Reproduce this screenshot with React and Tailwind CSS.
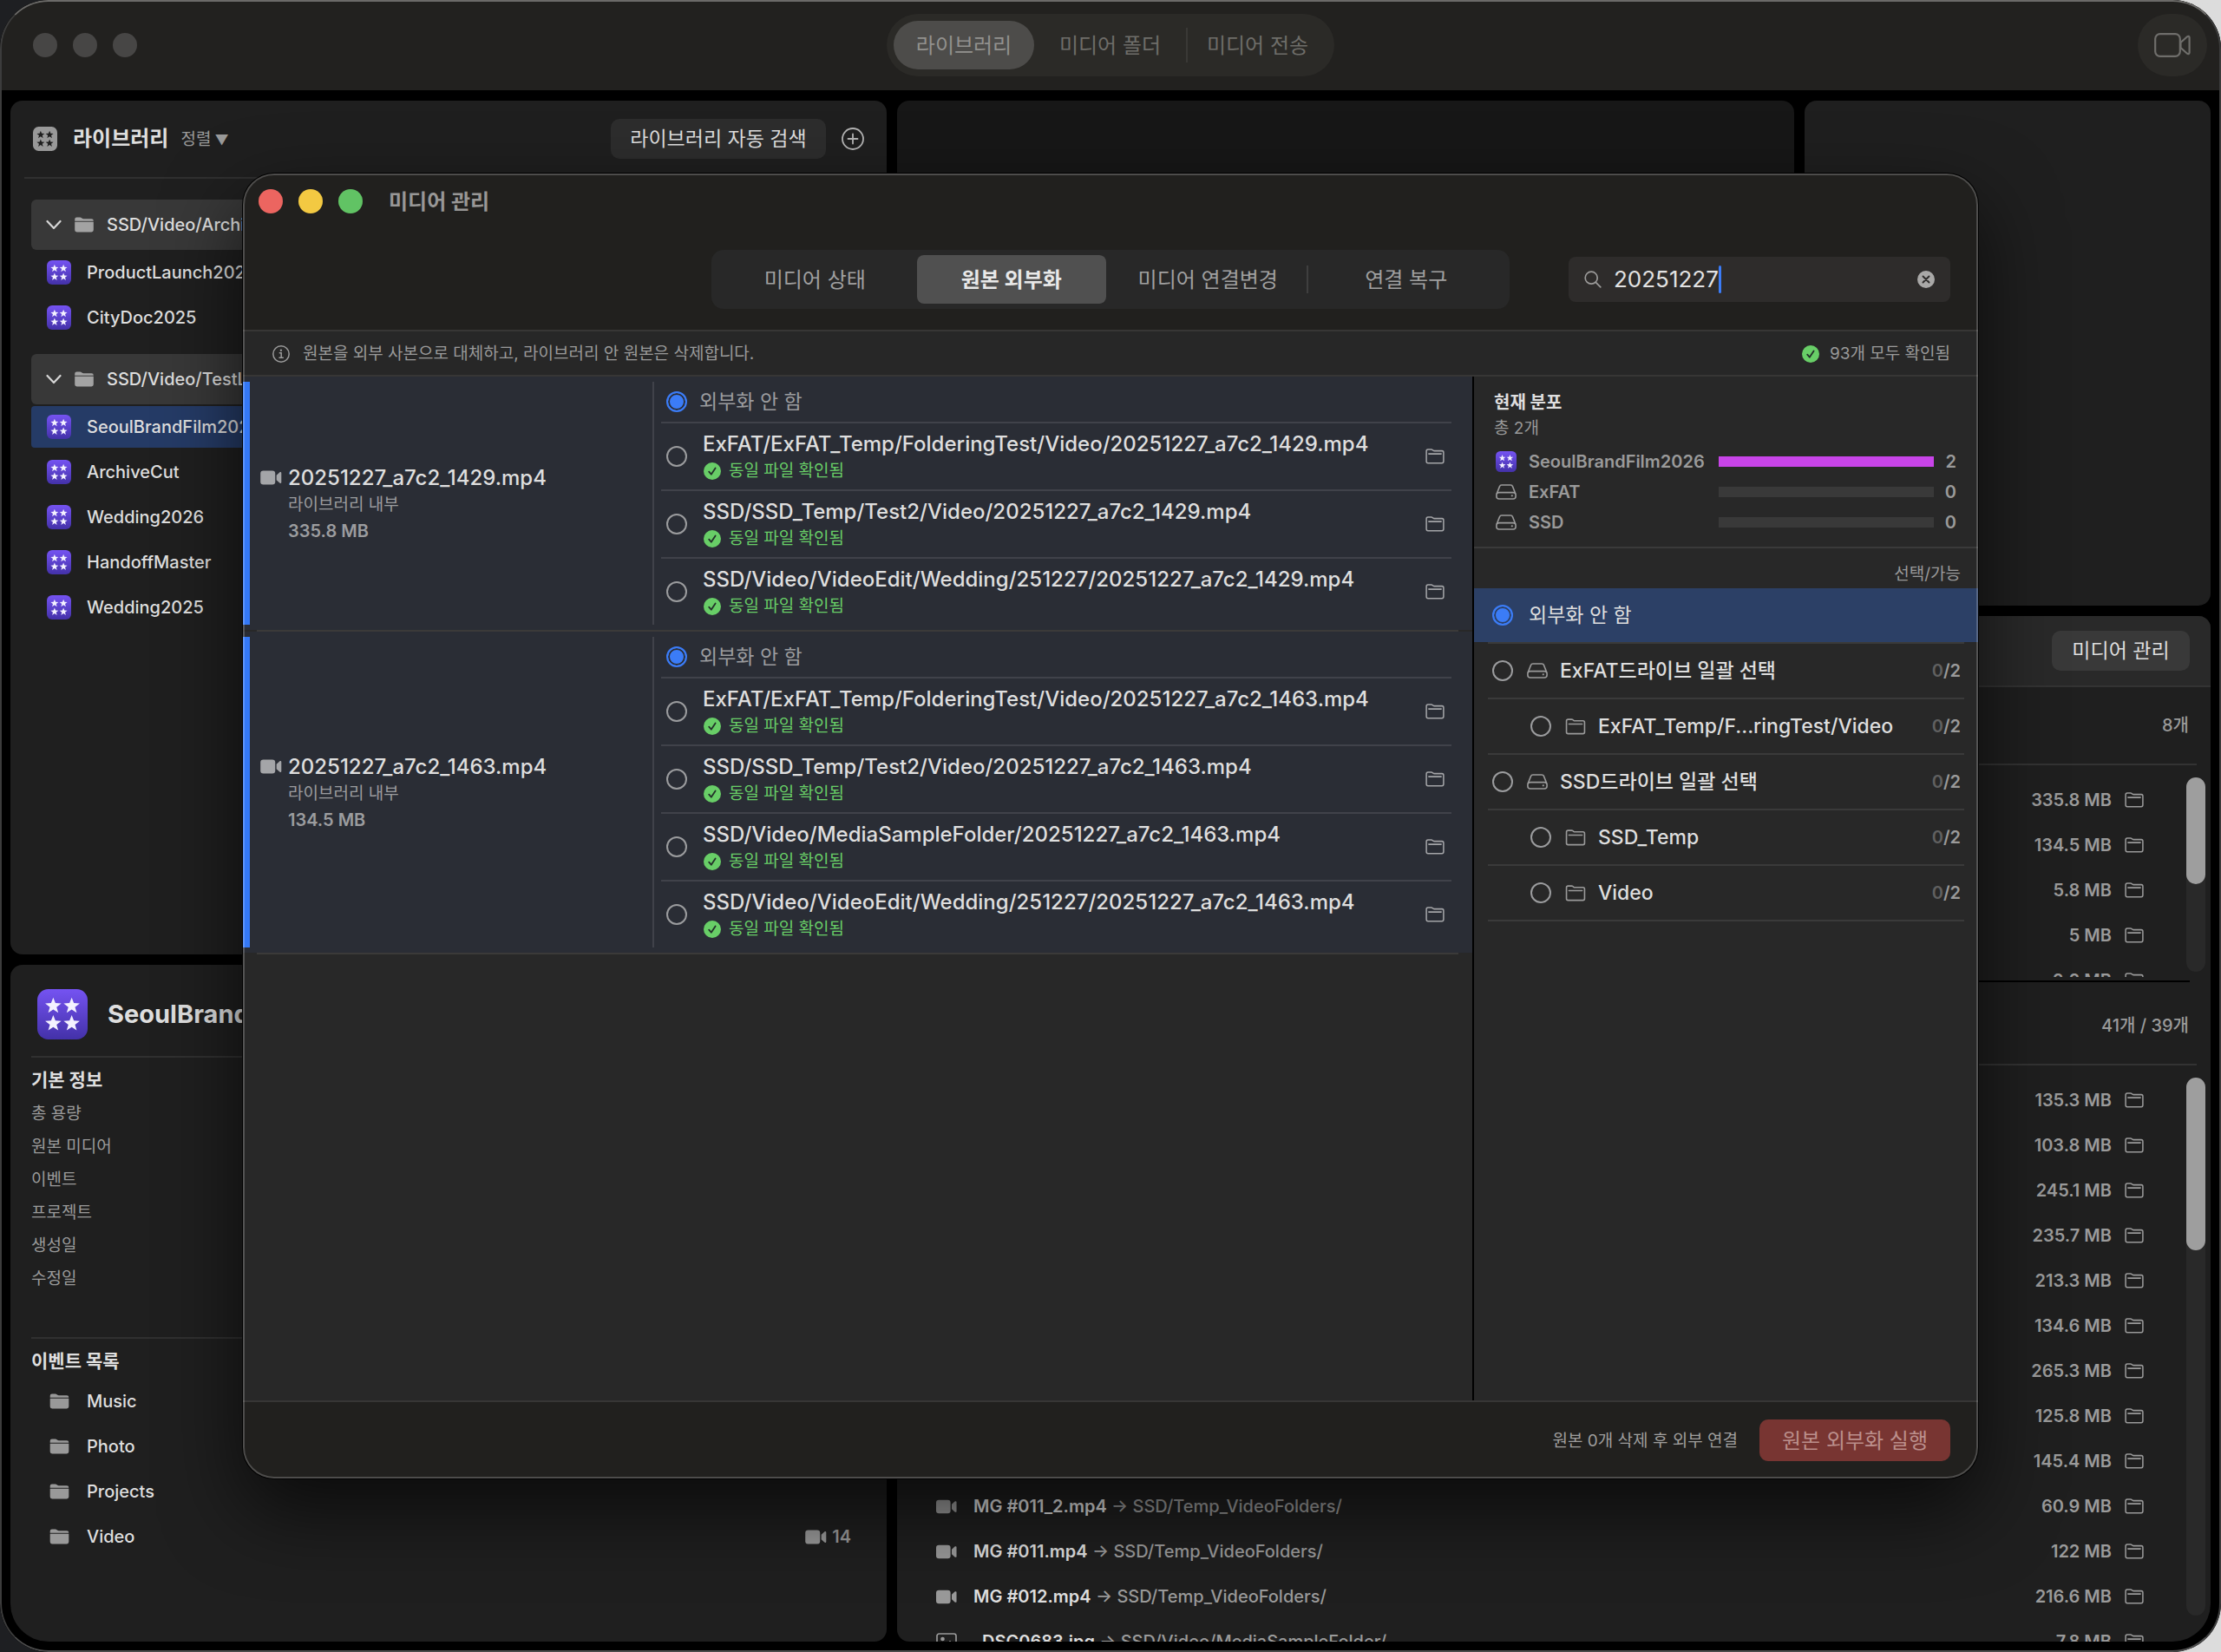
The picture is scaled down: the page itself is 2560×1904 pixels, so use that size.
import React, { useState } from "react";

const STAR = "0,-5 1.3,-1.7 4.8,-1.5 2,0.7 3,4.1 0,2.1 -3,4.1 -2,0.7 -4.8,-1.5 -1.3,-1.7";

const libraryGroups = [
  { path: "SSD/Video/Archive", items: ["ProductLaunch2025", "CityDoc2025"] },
  {
    path: "SSD/Video/TestLibrary",
    items: ["SeoulBrandFilm2026", "ArchiveCut", "Wedding2026", "HandoffMaster", "Wedding2025"],
  },
];

const infoLabels = ["총 용량", "원본 미디어", "이벤트", "프로젝트", "생성일", "수정일"];

const events = [
  { name: "Music" },
  { name: "Photo" },
  { name: "Projects" },
  { name: "Video", count: 14 },
];

const insideMedia = ["335.8 MB", "134.5 MB", "5.8 MB", "5 MB", "2.2 MB"];

const outsideMedia = [
  { size: "135.3 MB" },
  { size: "103.8 MB" },
  { size: "245.1 MB" },
  { size: "235.7 MB" },
  { size: "213.3 MB" },
  { size: "134.6 MB" },
  { size: "265.3 MB" },
  { size: "125.8 MB" },
  { size: "145.4 MB" },
  { size: "60.9 MB", name: "MG #011_2.mp4", path: "SSD/Temp_VideoFolders/" },
  { size: "122 MB", name: "MG #011.mp4", path: "SSD/Temp_VideoFolders/" },
  { size: "216.6 MB", name: "MG #012.mp4", path: "SSD/Temp_VideoFolders/" },
  { size: "7.8 MB", name: "_DSC0683.jpg", path: "SSD/Video/MediaSampleFolder/", photo: true },
];

const files = [
  {
    name: "20251227_a7c2_1429.mp4",
    size: "335.8 MB",
    copies: [
      "ExFAT/ExFAT_Temp/FolderingTest/Video/20251227_a7c2_1429.mp4",
      "SSD/SSD_Temp/Test2/Video/20251227_a7c2_1429.mp4",
      "SSD/Video/VideoEdit/Wedding/251227/20251227_a7c2_1429.mp4",
    ],
  },
  {
    name: "20251227_a7c2_1463.mp4",
    size: "134.5 MB",
    copies: [
      "ExFAT/ExFAT_Temp/FolderingTest/Video/20251227_a7c2_1463.mp4",
      "SSD/SSD_Temp/Test2/Video/20251227_a7c2_1463.mp4",
      "SSD/Video/MediaSampleFolder/20251227_a7c2_1463.mp4",
      "SSD/Video/VideoEdit/Wedding/251227/20251227_a7c2_1463.mp4",
    ],
  },
];

const distribution = [
  { name: "SeoulBrandFilm2026", count: 2, library: true },
  { name: "ExFAT", count: 0 },
  { name: "SSD", count: 0 },
];

const targets = [
  { name: "ExFAT드라이브 일괄 선택", drive: true },
  { name: "ExFAT_Temp/F...ringTest/Video" },
  { name: "SSD드라이브 일괄 선택", drive: true },
  { name: "SSD_Temp" },
  { name: "Video" },
];

const tabs = ["미디어 상태", "원본 외부화", "미디어 연결변경", "연결 복구"];

/* ICONS */

const Stars = ({ fill }) => (
  <g fill={fill}>
    <polygon points={STAR} transform="translate(9.5 10)" />
    <polygon points={STAR} transform="translate(20.5 10)" />
    <polygon points={STAR} transform="translate(9.5 20.5)" />
    <polygon points={STAR} transform="translate(20.5 20.5)" />
  </g>
);

const LibraryIcon = ({ className }) => (
  <svg viewBox="0 0 30 30" className={className} aria-hidden="true">
    <defs>
      <linearGradient id="libraryFill" x1="0" y1="0" x2="0" y2="1">
        <stop offset="0" stopColor="#7553f2" />
        <stop offset="1" stopColor="#4331a8" />
      </linearGradient>
    </defs>
    <rect width="30" height="30" rx="6.5" fill="url(#libraryFill)" />
    <Stars fill="#f4f2ff" />
  </svg>
);

const LibraryGlyph = ({ className }) => (
  <svg viewBox="0 0 30 30" className={className} aria-hidden="true">
    <rect width="30" height="30" rx="7" fill="#999999" />
    <Stars fill="#1f1f1f" />
  </svg>
);

const FolderSolid = ({ className }) => (
  <svg viewBox="0 0 24 20" className={className} aria-hidden="true">
    <path
      d="M0 5.2V3a2.4 2.4 0 0 1 2.4-2.4h4.4c.8 0 1.3.2 1.9.7l.9.7c.5.4.8.5 1.5.5h10.3A2.6 2.6 0 0 1 24 5.2z"
      fill="currentColor"
    />
    <path d="M0 6.5h24v10.3a2.6 2.6 0 0 1-2.6 2.6H2.6A2.6 2.6 0 0 1 0 16.8z" fill="currentColor" />
  </svg>
);

const FolderLine = ({ className }) => (
  <svg viewBox="0 0 24 20" className={className} fill="none" stroke="currentColor" strokeWidth="1.7" strokeLinejoin="round" strokeLinecap="round" aria-hidden="true">
    <path d="M1 16.5V3.2A2 2 0 0 1 3 1.2h4.3c.7 0 1.1.2 1.6.6l.8.6c.5.4.9.5 1.5.5H21a2 2 0 0 1 2 2v11.6a2 2 0 0 1-2 2H3a2 2 0 0 1-2-2z" />
    <path d="M4 6.8h16" />
  </svg>
);

const CameraSolid = ({ className }) => (
  <svg viewBox="0 0 26 18" className={className} fill="currentColor" aria-hidden="true">
    <rect width="18" height="17" y="0.5" rx="3.5" />
    <path d="M19.5 6l3.8-3.4c1-.9 2.2-.5 2.2.8v11.2c0 1.3-1.2 1.7-2.2.8L19.5 12z" />
  </svg>
);

const CameraLine = ({ className }) => (
  <svg viewBox="0 0 42 28" className={className} fill="none" stroke="currentColor" strokeWidth="2.2" strokeLinejoin="round" aria-hidden="true">
    <rect x="1.2" y="1.2" width="28.6" height="25.6" rx="5.5" />
    <path d="M30.5 11l7.5-6.7c1.2-1 2.6-.5 2.6 1.1v17.2c0 1.6-1.4 2.1-2.6 1.1L30.5 17z" />
  </svg>
);

const PhotoIcon = ({ className }) => (
  <svg viewBox="0 0 24 20" className={className} fill="none" stroke="currentColor" strokeWidth="1.7" aria-hidden="true">
    <rect x="1" y="1" width="22" height="18" rx="2.5" />
    <circle cx="7.5" cy="7" r="1.5" fill="currentColor" />
    <path d="M2 15.5l4.5-4 4 3.5 5.5-5 6.5 6" />
  </svg>
);

const DriveIcon = ({ className }) => (
  <svg viewBox="0 0 24 18" className={className} fill="none" stroke="currentColor" strokeWidth="1.6" strokeLinejoin="round" aria-hidden="true">
    <path d="M1.2 11L4.4 2.9C4.8 1.7 5.6 1 6.9 1h10.2c1.3 0 2.1.7 2.5 1.9L22.8 11" />
    <rect x="0.9" y="9.6" width="22.2" height="7.4" rx="3" />
    <circle cx="18.8" cy="13.3" r="1.1" fill="currentColor" stroke="none" />
  </svg>
);

const CheckBadge = () => (
  <svg viewBox="0 0 20 20" className="size-5 shrink-0" aria-hidden="true">
    <circle cx="10" cy="10" r="10" fill="#68ce67" />
    <path d="M6.2 10.7l2.6 3 4.8-7.3" fill="none" stroke="#23302a" strokeWidth="1.8" strokeLinecap="round" strokeLinejoin="round" />
  </svg>
);

const InfoIcon = () => (
  <svg viewBox="0 0 20 20" className="size-5 shrink-0" fill="none" stroke="currentColor" strokeWidth="1.5" strokeLinecap="round" aria-hidden="true">
    <circle cx="10" cy="10" r="9.2" />
    <circle cx="9.9" cy="5.7" r="1.2" fill="currentColor" stroke="none" />
    <path d="M8.3 8.8h1.9v5.2M8 14.3h4.3" />
  </svg>
);

const SearchIcon = () => (
  <svg viewBox="0 0 20 20" className="size-5 shrink-0" fill="none" stroke="#9c9b9a" strokeWidth="1.7" strokeLinecap="round" aria-hidden="true">
    <circle cx="8.2" cy="8.2" r="7" />
    <path d="M13.3 13.3l5.5 5.5" />
  </svg>
);

const ClearIcon = () => (
  <svg viewBox="0 0 20 20" className="size-5" aria-hidden="true">
    <circle cx="10" cy="10" r="10" fill="#a9a8a7" />
    <path d="M6.5 6.5l7 7M13.5 6.5l-7 7" stroke="#2d2b2a" strokeWidth="1.9" strokeLinecap="round" />
  </svg>
);

const PlusIcon = () => (
  <svg viewBox="0 0 26 26" className="size-[26px]" fill="none" stroke="#b5b5b5" strokeWidth="1.8" strokeLinecap="round" aria-hidden="true">
    <circle cx="13" cy="13" r="12" />
    <path d="M13 7.5v11M7.5 13h11" />
  </svg>
);

const ChevronIcon = () => (
  <svg viewBox="0 0 18 12" className="w-[18px] h-3 shrink-0" fill="none" stroke="#d6d6d6" strokeWidth="2.2" strokeLinecap="round" strokeLinejoin="round" aria-hidden="true">
    <path d="M1.5 2L9 10l7.5-8" />
  </svg>
);

/* SHARED PIECES */

const Lights = ({ active }) => (
  <div className="flex gap-[18px]">
    {["닫기", "최소화", "확대"].map((label, i) => (
      <button
        key={label}
        aria-label={label}
        className={`size-7 rounded-full ${
          active ? ["bg-[#ec6560]", "bg-[#f3c942]", "bg-[#61c364]"][i] : "bg-[#474645]"
        }`}
      />
    ))}
  </div>
);

const Radio = ({ name, defaultChecked, selected }) => (
  <input
    type="radio"
    name={name}
    defaultChecked={defaultChecked}
    className={`appearance-none size-6 shrink-0 rounded-full border-2 border-[#9b9c9e] checked:border-[#3b7cf7] checked:bg-[#3b7cf7] ${
      selected
        ? "checked:shadow-[inset_0_0_0_2px_#2c4066]"
        : "checked:shadow-[inset_0_0_0_2px_#2a2d35]"
    }`}
  />
);

const Scrollbar = ({ className, thumb }) => (
  <div className={`w-[22px] mr-1.5 shrink-0 rounded-full bg-[#292929] ${className}`}>
    <div className={`rounded-full bg-[#9e9e9e] ${thumb}`} />
  </div>
);

const MediaRow = ({ item }) => (
  <li className="flex items-center h-[52px] pl-[45px] pr-[49px]">
    {item.name && (
      <>
        {item.photo ? (
          <PhotoIcon className="w-6 h-5 text-[#999999]" />
        ) : (
          <CameraSolid className="w-6 h-[17px] text-[#999999]" />
        )}
        <p className="ml-[19px] text-[20px] leading-[28px] font-medium text-[#9a9a9a]">
          <span className="font-semibold text-[#dedede]">{item.name}</span> → {item.path}
        </p>
      </>
    )}
    <span className="ml-auto text-[20px] font-semibold text-[#9a9a9a]">{item.size}</span>
    <button aria-label="폴더 열기" className="ml-[15px] text-[#9a9a9a]">
      <FolderLine className="w-[22px] h-[18px]" />
    </button>
  </li>
);

/* MAIN WINDOW */

const LibraryPanel = () => (
  <section className="flex-1 min-h-0 rounded-[14px] bg-[#1f1f1f]">
    <header className="flex items-center h-[88px] pl-[26px] pr-[26px]">
      <LibraryGlyph className="size-7" />
      <h2 className="ml-[18px] text-[24px] font-bold text-[#dedede]">라이브러리</h2>
      <button className="ml-[14px] flex items-center gap-1 pt-0.5 text-[19px] text-[#9a9a9a]">
        정렬 <span className="text-[16px]">▼</span>
      </button>
      <button className="ml-auto h-[46px] w-[248px] rounded-[10px] bg-[#2d2d2d] text-[23px] text-[#dedede]">
        라이브러리 자동 검색
      </button>
      <button aria-label="라이브러리 추가" className="ml-[18px]">
        <PlusIcon />
      </button>
    </header>
    <div className="mx-4 h-0.5 bg-[#303030]" />

    <div className="flex flex-col gap-4 mx-6 mt-6">
      {libraryGroups.map((group) => (
        <div key={group.path}>
          <button className="flex items-center w-full h-[58px] pl-[17px] rounded-md bg-[#383838] text-[20px] font-medium text-[#dedede]">
            <ChevronIcon />
            <FolderSolid className="ml-[15px] mr-[15px] w-[22px] h-[18px] text-[#a3a3a3]" />
            {group.path}
          </button>
          <ul>
            {group.items.map((item) => (
              <li key={item} className="py-0.5">
                <button
                  className={`flex items-center gap-[18px] w-full h-12 pl-[18px] rounded text-[20px] font-medium text-[#dedede] ${
                    item === "SeoulBrandFilm2026" ? "bg-[#253b66]" : ""
                  }`}
                >
                  <LibraryIcon className="size-7" />
                  {item}
                </button>
              </li>
            ))}
          </ul>
        </div>
      ))}
    </div>
  </section>
);

const InfoPanel = () => (
  <section className="h-[780px] px-6 rounded-[14px] rounded-bl-[44px] bg-[#1f1f1f]">
    <header className="flex items-center gap-[23px] h-[105px] pt-2 pl-[7px]">
      <LibraryIcon className="size-[58px]" />
      <h2 className="text-[29px] font-bold text-[#dedede]">SeoulBrandFilm2026</h2>
    </header>
    <div className="h-0.5 bg-[#303030]" />

    <h3 className="mt-1.5 text-[21px] leading-[40px] font-bold text-[#dedede]">기본 정보</h3>
    <ul className="text-[19px] leading-[38px] text-[#9a9a9a]">
      {infoLabels.map((label) => (
        <li key={label}>{label}</li>
      ))}
    </ul>
    <div className="mt-12 h-0.5 bg-[#303030]" />

    <h3 className="mt-1.5 text-[21px] leading-[40px] font-bold text-[#dedede]">이벤트 목록</h3>
    <ul>
      {events.map((event) => (
        <li key={event.name} className="flex items-center h-[52px] pl-[21px] pr-[17px] text-[20px] font-medium text-[#dedede]">
          <FolderSolid className="mr-5 w-[23px] h-[18px] text-[#999999]" />
          {event.name}
          {event.count && (
            <span className="ml-auto flex items-center gap-1.5 font-semibold text-[#9a9a9a]">
              <CameraSolid className="w-[25px] h-[17px]" />
              {event.count}
            </span>
          )}
        </li>
      ))}
    </ul>
  </section>
);

const MediaPanel = () => (
  <section className="flex flex-col flex-1 min-h-0 overflow-hidden rounded-[14px] rounded-br-[44px] bg-[#1f1f1f]">
    <header className="flex items-center justify-end h-20 shrink-0 pr-6 bg-[#292929]">
      <button className="h-[46px] w-[159px] rounded-[10px] bg-[#393939] text-[23px] text-[#dedede]">
        미디어 관리
      </button>
    </header>
    <div className="h-0.5 shrink-0 bg-[#333333]" />

    <p className="pr-[25px] shrink-0 text-right text-[20px] leading-[88px] font-medium text-[#9a9a9a]">8개</p>
    <div className="mx-4 h-0.5 shrink-0 bg-[#333333]" />
    <div className="flex h-[244px] shrink-0">
      <ul className="flex-1 pt-3.5 overflow-hidden">
        {insideMedia.map((size) => (
          <MediaRow key={size} item={{ size }} />
        ))}
      </ul>
      <Scrollbar className="mt-3.5 mb-1.5" thumb="h-[123px]" />
    </div>
    <div className="mt-1 mx-6 h-0.5 shrink-0 bg-black" />

    <p className="pt-1.5 pr-[25px] shrink-0 text-right text-[20px] leading-[88px] font-medium text-[#9a9a9a]">41개 / 39개</p>
    <div className="mx-4 h-0.5 shrink-0 bg-[#333333]" />
    <div className="flex flex-1 min-h-0">
      <ul className="flex-1 pt-3.5 overflow-hidden">
        {outsideMedia.map((item) => (
          <MediaRow key={item.size} item={item} />
        ))}
      </ul>
      <Scrollbar className="mt-3.5 mb-[30px]" thumb="h-[199px]" />
    </div>
  </section>
);

/* MEDIA MANAGER WINDOW */

const FileRow = ({ file }) => (
  <li>
    <div className="flex py-1.5 bg-[#2a2d35]">
      <div className="w-2 bg-[#3478f6]" />
      <div className="flex w-[464px] pl-3 items-center">
        <div className="grid grid-cols-[32px_1fr] items-center pt-0.5 leading-[31px]">
          <CameraSolid className="w-[25px] h-[17px] text-[#a4a5a8]" />
          <h4 className="text-[24px] leading-[31px] font-medium text-[#dedede]">{file.name}</h4>
          <p className="col-start-2 text-[19px] leading-[31px] text-[#9b9c9f]">라이브러리 내부</p>
          <p className="col-start-2 text-[20px] leading-[31px] font-semibold text-[#9b9c9f]">{file.size}</p>
        </div>
      </div>
      <ul className="flex-1 pl-2 mr-6 border-l-2 border-[#40424a]">
        <li>
          <label className="flex items-center gap-[14px] h-[46px] pl-1.5 text-[23px] text-[#9b9c9f]">
            <Radio name={file.name} defaultChecked />
            외부화 안 함
          </label>
        </li>
        {file.copies.map((copy) => (
          <li key={copy} className="flex items-center h-[78px] pr-2 border-t-2 border-[#40424a]">
            <label className="flex items-center gap-[18px] pl-1.5">
              <Radio name={file.name} />
              <span className="pt-0.5">
                <span className="block text-[24px] leading-[31px] font-medium text-[#dedede]">{copy}</span>
                <span className="flex items-center gap-[9px] pl-px text-[19px] leading-[31px] text-[#68ce67]">
                  <CheckBadge />
                  동일 파일 확인됨
                </span>
              </span>
            </label>
            <button aria-label="폴더 열기" className="ml-auto text-[#a4a5a8]">
              <FolderLine className="w-[22px] h-[18px]" />
            </button>
          </li>
        ))}
      </ul>
    </div>
    <div className="mx-4 h-0.5 bg-[#3b3a39]" />
  </li>
);

const TargetCount = () => (
  <span className="ml-auto text-[20px] font-semibold text-[#9a9a9a]">
    <span className="text-[#606060]">0</span>/2
  </span>
);

const TargetPanel = () => (
  <aside className="w-[583px] shrink-0 border-l-2 border-black">
    <div className="pt-4 pl-[23px] pr-[25px] pb-[11px]">
      <h3 className="text-[20px] leading-7 font-bold text-[#dedede]">현재 분포</h3>
      <p className="pt-0.5 text-[19px] leading-7 text-[#9a9a9a]">총 2개</p>
      <ul className="mt-1.5 text-[20px] font-semibold text-[#9a9a9a]">
        {distribution.map((item) => (
          <li key={item.name} className="flex items-center h-[35px] pl-0.5">
            {item.library ? <LibraryIcon className="size-6" /> : <DriveIcon className="w-6 h-[18px]" />}
            <span className="w-[233px] shrink-0 pl-[14px] whitespace-nowrap">{item.name}</span>
            <span className="flex-1 h-3 mr-[12px] bg-[#393939]">
              <span className="block h-3 bg-[#c844e8]" style={{ width: `${(item.count / 2) * 100}%` }} />
            </span>
            <span className="w-[14px] text-right">{item.count}</span>
          </li>
        ))}
      </ul>
    </div>
    <div className="h-0.5 bg-[#3a3a3a]" />

    <p className="h-[46px] pt-4 pr-[20px] text-right text-[19px] leading-7 text-[#9a9a9a]">선택/가능</p>
    <label className="flex items-center gap-[18px] h-[62px] pl-[21px] bg-[#2c4066] text-[23px] text-[#dedede]">
      <Radio name="target" defaultChecked selected />
      외부화 안 함
    </label>
    <ul className="mx-4 border-t-2 border-[#3a3a3a]">
      {targets.map((target) => (
        <li key={target.name} className="border-b-2 border-[#3a3a3a]">
          <label
            className={`flex items-center h-[62px] pr-1 text-[23px] font-medium text-[#dedede] ${
              target.drive ? "pl-[5px]" : "pl-[49px]"
            }`}
          >
            <Radio name="target" />
            {target.drive ? (
              <DriveIcon className="ml-4 mr-[14px] w-6 h-[18px] text-[#9a9a9a]" />
            ) : (
              <FolderLine className="ml-4 mr-[14px] w-6 h-[19px] text-[#9a9a9a]" />
            )}
            {target.name}
            <TargetCount />
          </label>
        </li>
      ))}
    </ul>
  </aside>
);

const MediaManager = () => {
  const [tab, setTab] = useState(1);
  const [query, setQuery] = useState("20251227");

  return (
    <div
      role="dialog"
      aria-label="미디어 관리"
      className="absolute inset-x-[280px] inset-y-[200px] flex flex-col overflow-hidden rounded-[36px] bg-[#282828] shadow-[0_0_0_1px_#000000,0_36px_90px_rgba(0,0,0,0.65)]"
    >
      {/* HEADER */}
      <div className="shrink-0 bg-[#21201e]">
        <div className="flex items-center gap-[30px] h-16 pl-[18px]">
          <Lights active />
          <h1 className="pt-0.5 text-[24px] font-bold text-[#989796]">미디어 관리</h1>
        </div>
        <div className="grid grid-cols-[1fr_920px_1fr] items-center h-[116px] px-8">
          <div className="col-start-2 flex h-[68px] p-1.5 rounded-[14px] bg-[#282828]">
            {tabs.map((label, i) => (
              <React.Fragment key={label}>
                {i === 3 && <div className="w-0.5 h-8 self-center bg-[#3f3f3f]" />}
                <button
                  onClick={() => setTab(i)}
                  className={`flex-1 mx-1 pt-0.5 rounded-lg text-[24px] ${
                    tab === i ? "bg-[#505050] font-bold text-[#e8e8e8]" : "text-[#a0a0a0]"
                  }`}
                >
                  {label}
                </button>
              </React.Fragment>
            ))}
          </div>
          <label className="justify-self-end flex items-center w-[440px] h-[52px] pl-[18px] pr-[18px] rounded-lg bg-[#2e2c2b]">
            <SearchIcon />
            <input
              aria-label="검색"
              value={query}
              onChange={(e) => setQuery(e.target.value)}
              className="field-sizing-content ml-[14px] bg-transparent text-[26px] leading-8 text-[#e2e2e2] caret-transparent outline-none"
            />
            <span className="w-[3px] h-8 rounded-full bg-[#3b7cf7]" />
            <button aria-label="지우기" className="ml-auto" onClick={() => setQuery("")}>
              <ClearIcon />
            </button>
          </label>
        </div>
      </div>
      <div className="flex items-center h-[54px] shrink-0 px-8 border-y-2 border-[#373635] bg-[#272727] text-[19px] text-[#9a9a9a]">
        <span className="flex items-center gap-[15px] pl-0.5 pt-0.5">
          <InfoIcon />
          원본을 외부 사본으로 대체하고, 라이브러리 안 원본은 삭제합니다.
        </span>
        <span className="ml-auto flex items-center gap-3 pt-0.5">
          <CheckBadge />
          93개 모두 확인됨
        </span>
      </div>

      {/* BODY */}
      <div className="flex flex-1 min-h-0">
        <ul className="flex-1">
          {files.map((file) => (
            <FileRow key={file.name} file={file} />
          ))}
        </ul>
        <TargetPanel />
      </div>

      {/* FOOTER */}
      <footer className="flex items-center justify-end gap-[25px] h-[90px] shrink-0 pr-8 border-t-2 border-[#373635] bg-[#21201e]">
        <span className="pt-0.5 text-[19px] text-[#9f9e9d]">원본 0개 삭제 후 외부 연결</span>
        <button disabled className="w-[220px] h-12 pt-0.5 rounded-[10px] bg-[#783532] text-[24px] text-[#bb8f8c]">
          원본 외부화 실행
        </button>
      </footer>
      <div className="absolute inset-0 rounded-[36px] border-2 border-white/20 pointer-events-none" />
    </div>
  );
};

const App = () => {
  return (
    <div className="h-screen bg-linear-to-r from-[#1e1f22] from-50% to-[#dcdcdc] to-90% font-[family-name:Inter,'Noto_Sans_CJK_KR',sans-serif]">
      <main className="relative flex flex-col h-full overflow-hidden rounded-[56px] bg-black">
        <header className="grid grid-cols-[1fr_auto_1fr] items-center h-[104px] shrink-0 px-4 bg-[#22211f]">
          <div className="pl-[22px]">
            <Lights />
          </div>
          <nav className="flex items-center h-[72px] px-2 rounded-full bg-[#2b2a27] text-[24px] text-[#6e6d69]">
            <button className="w-[162px] h-14 pt-0.5 rounded-full bg-[#4d4c4a] text-[#92918e]">라이브러리</button>
            <button className="w-[175px] h-14 pt-0.5">미디어 폴더</button>
            <div className="w-0.5 h-10 bg-[#3a3936]" />
            <button className="w-[161px] h-14 pt-0.5">미디어 전송</button>
          </nav>
          <button aria-label="녹화" className="justify-self-end flex items-center justify-center w-20 h-[72px] rounded-full bg-[#2b2a27] text-[#6f6e6b]">
            <CameraLine className="w-[42px] h-7" />
          </button>
        </header>

        <div className="flex flex-1 min-h-0 gap-3 p-3">
          <div className="flex flex-col gap-3 w-[1010px] shrink-0">
            <LibraryPanel />
            <InfoPanel />
          </div>
          <div className="flex flex-col flex-1 gap-3">
            <div className="flex gap-3 h-[582px]">
              <div className="flex-1 rounded-[14px] bg-[#171717]" />
              <div className="w-[468px] rounded-[14px] bg-[#1f1f1f]" />
            </div>
            <MediaPanel />
          </div>
        </div>

        <MediaManager />
        <div className="absolute inset-0 rounded-[56px] border-2 border-t-[#6b6a68] border-x-[#3c3c3c] border-b-[#4c4c4c] pointer-events-none" />
      </main>
    </div>
  );
};

export default App;
